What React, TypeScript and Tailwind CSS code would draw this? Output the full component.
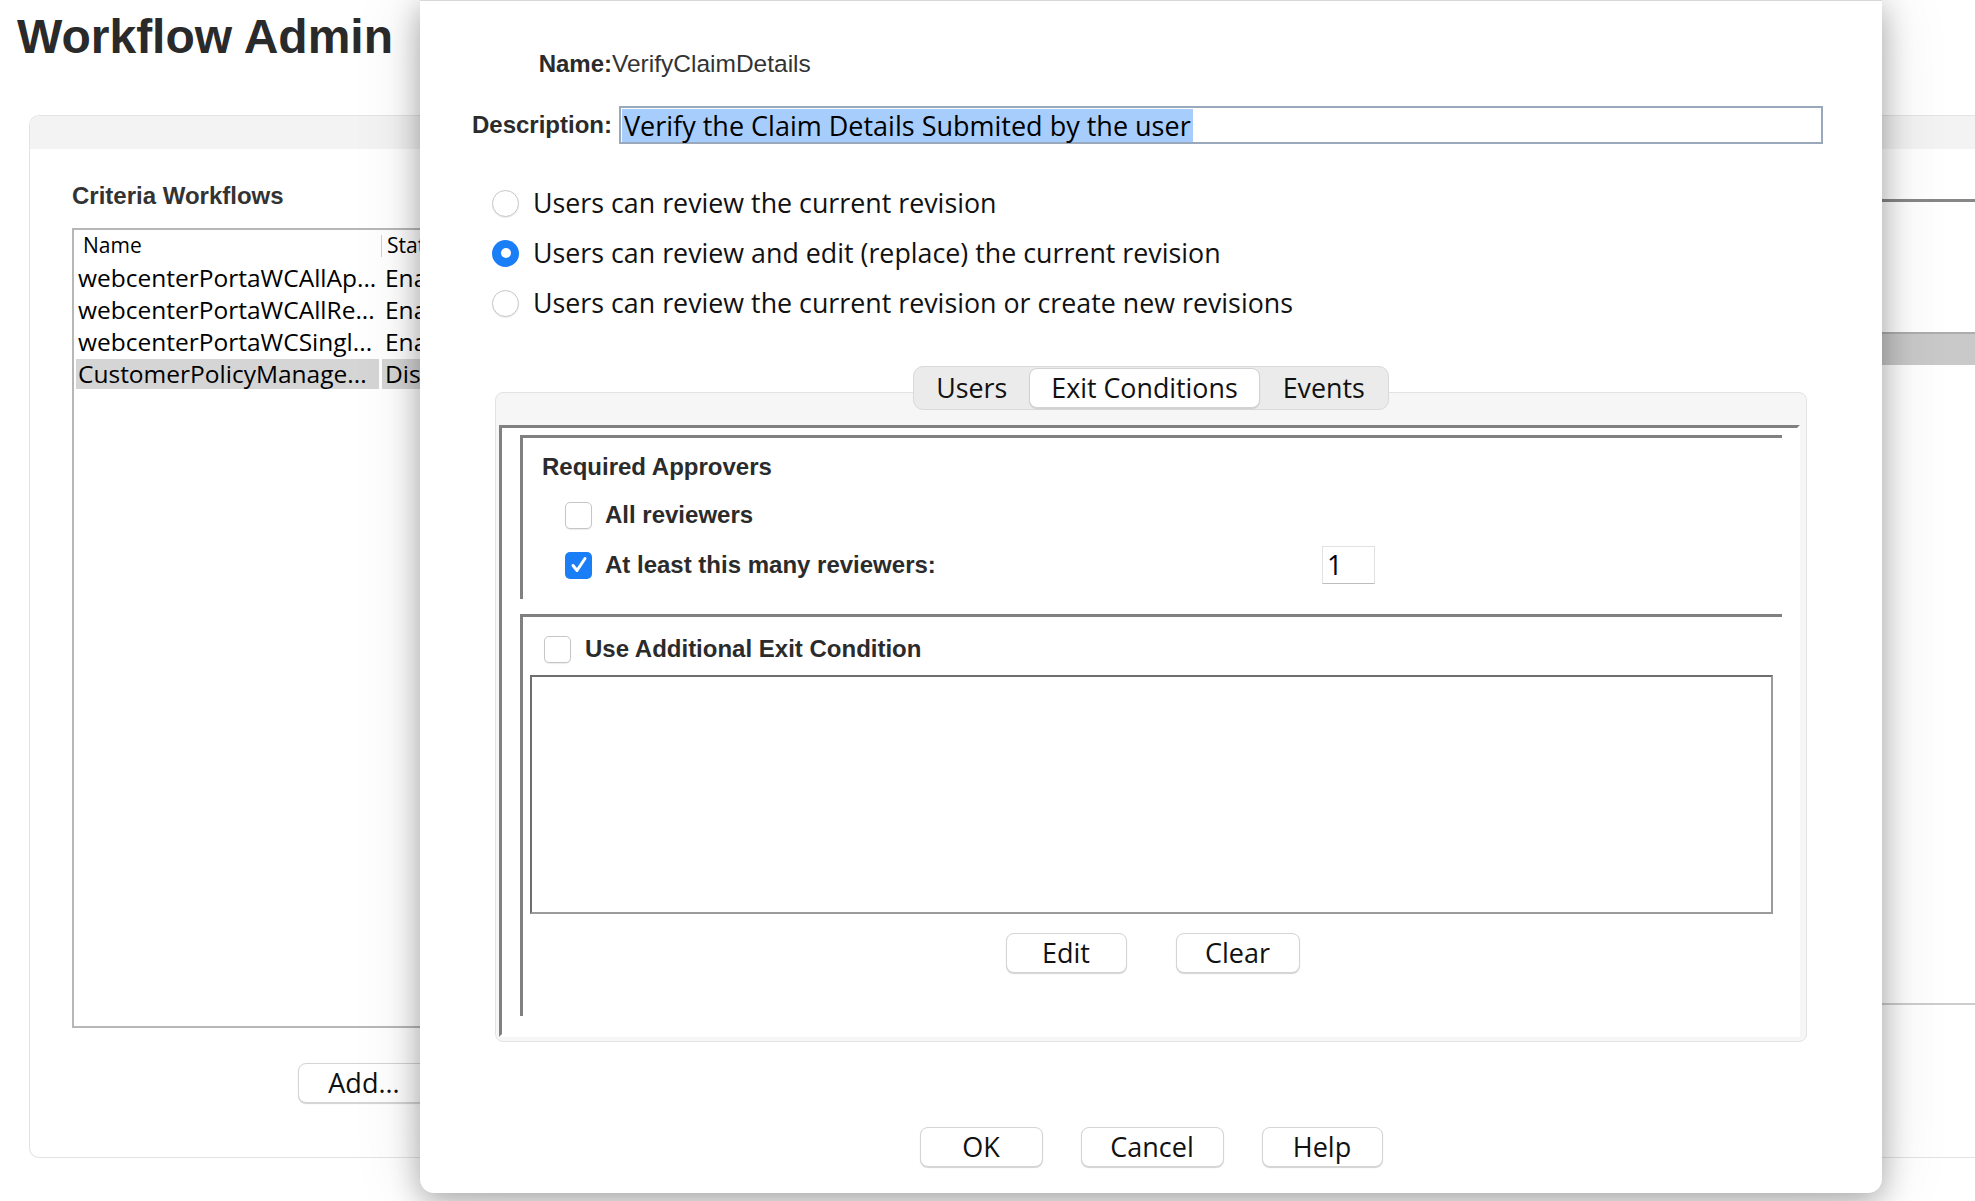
import React from 'react';

// font stacks used across the page
const OS = "font-['Open_Sans',sans-serif]";
const LS = "font-['Liberation_Sans',Arial,sans-serif]";

interface Row {
  name: string;
  status: string;
  selected?: boolean;
}

const workflows: Row[] = [
  { name: 'webcenterPortaWCAllAp...', status: 'Enabled' },
  { name: 'webcenterPortaWCAllRe...', status: 'Enabled' },
  { name: 'webcenterPortaWCSingl...', status: 'Enabled' },
  { name: 'CustomerPolicyManage...', status: 'Disabled', selected: true },
];

const MacButton = ({ label, width }: { label: string; width: string }) => (
  <button
    className={`${OS} ${width} flex h-[40px] items-center justify-center rounded-[8px] border border-[#d4d4d4] bg-white text-[27px] text-[#111] shadow-[0_1px_1px_rgba(0,0,0,0.18)]`}
  >
    {label}
  </button>
);

const Radio = ({ checked }: { checked?: boolean }) =>
  checked ? (
    <span className="flex h-[27px] w-[27px] shrink-0 items-center justify-center rounded-full bg-[#1a7ff6]">
      <span className="h-[10px] w-[10px] rounded-full bg-white" />
    </span>
  ) : (
    <span className="h-[27px] w-[27px] shrink-0 rounded-full border border-[#c6c6c6] bg-white shadow-[0_1px_1px_rgba(0,0,0,0.08)]" />
  );

const Checkbox = ({ checked }: { checked?: boolean }) =>
  checked ? (
    <span className="flex h-[27px] w-[27px] shrink-0 items-center justify-center rounded-[5px] bg-[#1a7ff6]">
      <svg width="20" height="20" viewBox="0 0 20 20" fill="none">
        <path d="M4 10.5l4 5L16 3.5" stroke="white" strokeWidth="3" strokeLinecap="round" strokeLinejoin="round" />
      </svg>
    </span>
  ) : (
    <span className="h-[27px] w-[27px] shrink-0 rounded-[5px] border border-[#c6c6c6] bg-white shadow-[0_1px_1px_rgba(0,0,0,0.08)]" />
  );

const BackgroundPage = () => (
  <div className="flex h-full flex-col">
    <h1 className={`${LS} pl-[17px] pt-[13px] text-[48px] font-bold leading-[48px] text-[#2a2a2a]`}>Workflow Admin</h1>
    <div className="ml-[29px] mt-[54px] flex h-[1043px] flex-col rounded-l-[10px] border border-r-0 border-[#e3e3e3]">
      <div className="h-[33px] rounded-tl-[10px] bg-[#f3f3f3]" />
      <div className="flex flex-1">
        {/* criteria workflows list */}
        <div className="w-[700px] shrink-0 pl-[42px] pt-[33px]">
          <div className={`${LS} h-[28px] text-[24px] font-bold leading-[28px] text-[#333]`}>Criteria Workflows</div>
          <div className={`${OS} mt-[18px] h-[800px] w-[488px] border-2 border-[#b7b7b7] text-black`}>
            <div className="flex h-[32px] items-center text-[21px]">
              <span className="w-[307px] pl-[9px]">Name</span>
              <span className="h-[22px] border-l border-[#d2d2d2]" />
              <span className="pl-[5px]">Status</span>
            </div>
            {workflows.map((w) => (
              <div key={w.name} className="flex h-[32px] py-[1px] text-[24.5px] leading-[30px]">
                <span className={`ml-[2px] w-[303px] pl-[2px] ${w.selected ? 'bg-[#d5d5d5]' : ''}`}>{w.name}</span>
                <span className={`ml-[3px] flex-1 pl-[3px] ${w.selected ? 'bg-[#d5d5d5]' : ''}`}>{w.status}</span>
              </div>
            ))}
          </div>
          <div className="ml-[226px] mt-[35px]">
            <MacButton label="Add..." width="w-[132px]" />
          </div>
        </div>

        {/* stages table, mostly hidden under the dialog */}
        <div className="flex-1 pt-[50px]">
          <div className="h-[806px] border-b-2 border-t-[3px] border-b-[#cdcdcd] border-t-[#878787] pt-[130px]">
            <div className="h-[33px] border-t-2 border-[#adadad] bg-[#c9c9c9]" />
          </div>
        </div>
      </div>
    </div>
  </div>
);

const ReviewDialog = () => (
  <div className="absolute left-[420px] top-0 flex h-[1193px] w-[1462px] flex-col rounded-b-[14px] border-t border-[#d8d8d8] bg-white shadow-[0_8px_30px_rgba(0,0,0,0.3),0_0_70px_rgba(0,0,0,0.12)]">
    {/* name */}
    <div className="mt-[49px] flex h-[28px] items-center">
      <span className={`${LS} w-[192px] text-right text-[24px] font-bold text-[#2b2b2b]`}>Name:</span>
      <span className={`${LS} text-[24.5px] text-[#333]`}>VerifyClaimDetails</span>
    </div>

    {/* description */}
    <div className="mt-[28px] flex h-[38px] items-center">
      <span className={`${LS} w-[192px] text-right text-[24px] font-bold text-[#2b2b2b]`}>Description:</span>
      <div className="ml-[7px] flex h-[38px] w-[1204px] items-center border-2 border-[#9aa8bb] pl-[1px]">
        <span className={`${OS} bg-[#a7cdfc] px-[2px] text-[27px] leading-[33px] text-black`}>
          Verify the Claim Details Submited by the user
        </span>
      </div>
    </div>

    {/* review options */}
    <div className={`${OS} mt-[34px] flex flex-col text-[26.8px] text-[#111]`}>
      <label className="flex h-[50px] items-center gap-[14px] pl-[72px]">
        <Radio />
        Users can review the current revision
      </label>
      <label className="flex h-[50px] items-center gap-[14px] pl-[72px]">
        <Radio checked />
        Users can review and edit (replace) the current revision
      </label>
      <label className="flex h-[50px] items-center gap-[14px] pl-[72px]">
        <Radio />
        Users can review the current revision or create new revisions
      </label>
    </div>

    {/* tabs */}
    <div className={`${OS} relative z-10 mx-auto mt-[38px] flex h-[44px] items-center rounded-[10px] border border-[#d9d9d9] bg-[#ebebeb] text-[26.8px] text-[#111]`}>
      <span className="px-[22px]">Users</span>
      <span className="flex h-[40px] items-center rounded-[8px] border border-[#d3d3d3] bg-white px-[21px] shadow-[0_1px_1px_rgba(0,0,0,0.12)]">
        Exit Conditions
      </span>
      <span className="px-[23px]">Events</span>
    </div>

    <div className="mx-[75px] -mt-[18px] h-[650px] rounded-[8px] border border-[#e3e3e3] bg-[#f6f6f6] pb-[4px] pl-[3px] pr-[6px] pt-[32px]">
      <div className="flex h-full flex-col border-[3px] border-b-white border-l-[#808080] border-r-white border-t-[#808080] bg-white pl-[18px] pr-[15px] pt-[7px]">
        {/* required approvers */}
        <div className={`${LS} h-[164px] border-l-[3px] border-t-[3px] border-[#808080] pl-[19px] pt-[15px] text-[24px] font-bold text-[#2b2b2b]`}>
          <div className="h-[28px] leading-[28px]">Required Approvers</div>
          <div className="mt-[14px] flex h-[40px] items-center gap-[13px] pl-[23px]">
            <Checkbox />
            <span>All reviewers</span>
          </div>
          <div className="mt-[10px] flex h-[40px] items-center gap-[13px] pl-[23px]">
            <Checkbox checked />
            <span className="w-[717px]">At least this many reviewers:</span>
            <span
              className={`${OS} -ml-[13px] flex h-[38px] w-[53px] items-center border border-[#e2e2e2] border-b-[#bdbdbd] bg-white pl-[4px] text-[27px] font-normal text-black`}
            >
              1
            </span>
          </div>
        </div>

        {/* additional exit condition */}
        <div className="mt-[15px] flex h-[402px] flex-col border-l-[3px] border-t-[3px] border-[#808080]">
          <div className={`${LS} mt-[12px] flex h-[40px] items-center gap-[14px] pl-[21px] text-[24px] font-bold text-[#2b2b2b]`}>
            <Checkbox />
            <span>Use Additional Exit Condition</span>
          </div>
          <div className="ml-[7px] mt-[6px] h-[239px] w-[1243px] border-2 border-b-[#9b9b9b] border-l-[#6e6e6e] border-r-[#9b9b9b] border-t-[#6e6e6e] bg-white" />
          <div className="mt-[19px] flex justify-center gap-[49px]">
            <MacButton label="Edit" width="w-[121px]" />
            <MacButton label="Clear" width="w-[124px]" />
          </div>
        </div>
      </div>
    </div>

    {/* dialog actions */}
    <div className="mt-[85px] flex justify-center gap-[38px]">
      <MacButton label="OK" width="w-[123px]" />
      <MacButton label="Cancel" width="w-[143px]" />
      <MacButton label="Help" width="w-[121px]" />
    </div>
  </div>
);

export default function App() {
  return (
    <div className="relative h-[1201px] w-[1975px] overflow-hidden bg-white">
      <BackgroundPage />
      <ReviewDialog />
    </div>
  );
}
